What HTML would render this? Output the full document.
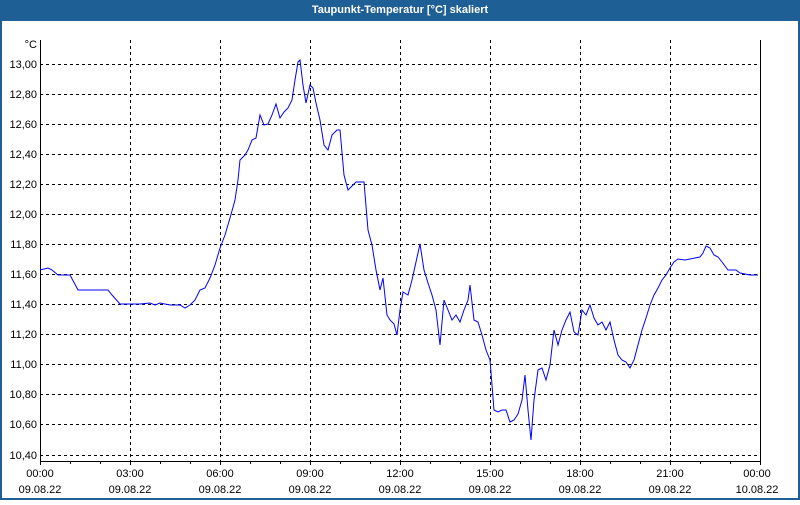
<!DOCTYPE html>
<html><head><meta charset="utf-8"><style>
body{margin:0;width:800px;height:500px;overflow:hidden;background:#fff;font-family:"Liberation Sans","DejaVu Sans",sans-serif}
</style></head><body>
<svg width="800" height="500" xmlns="http://www.w3.org/2000/svg" font-family="Liberation Sans, DejaVu Sans, sans-serif" font-size="11">
<rect x="0" y="0" width="800" height="500" fill="#1e5f96"/>
<rect x="2" y="21" width="796" height="477" fill="#fff"/>
<text x="400" y="13" fill="#fff" font-weight="bold" text-anchor="middle">Taupunkt-Temperatur [°C] skaliert</text>
<g stroke="#000" stroke-width="1" stroke-dasharray="3,3" shape-rendering="crispEdges">
<line x1="40" x2="760" y1="64.5" y2="64.5"/><line x1="40" x2="760" y1="94.5" y2="94.5"/><line x1="40" x2="760" y1="124.5" y2="124.5"/><line x1="40" x2="760" y1="154.5" y2="154.5"/><line x1="40" x2="760" y1="184.5" y2="184.5"/><line x1="40" x2="760" y1="214.5" y2="214.5"/><line x1="40" x2="760" y1="244.5" y2="244.5"/><line x1="40" x2="760" y1="274.5" y2="274.5"/><line x1="40" x2="760" y1="304.5" y2="304.5"/><line x1="40" x2="760" y1="334.5" y2="334.5"/><line x1="40" x2="760" y1="364.5" y2="364.5"/><line x1="40" x2="760" y1="394.5" y2="394.5"/><line x1="40" x2="760" y1="424.5" y2="424.5"/><line x1="40" x2="760" y1="455.5" y2="455.5"/>
<line y1="40" y2="461" x1="130.5" x2="130.5"/><line y1="40" y2="461" x1="220.5" x2="220.5"/><line y1="40" y2="461" x1="310.5" x2="310.5"/><line y1="40" y2="461" x1="400.5" x2="400.5"/><line y1="40" y2="461" x1="490.5" x2="490.5"/><line y1="40" y2="461" x1="580.5" x2="580.5"/><line y1="40" y2="461" x1="670.5" x2="670.5"/>
</g>
<g stroke="#000" stroke-width="1" shape-rendering="crispEdges" fill="none">
<polyline points="40.5,40 40.5,461.5 760.5,461.5 760.5,40"/>
<path d="M40.5 461v4M70.5 461v3M100.5 461v3M130.5 461v4M160.5 461v3M190.5 461v3M220.5 461v4M250.5 461v3M280.5 461v3M310.5 461v4M340.5 461v3M370.5 461v3M400.5 461v4M430.5 461v3M460.5 461v3M490.5 461v4M520.5 461v3M550.5 461v3M580.5 461v4M610.5 461v3M640.5 461v3M670.5 461v4M700.5 461v3M730.5 461v3M760.5 461v4"/>
</g>
<g fill="#000" text-anchor="end">
<text x="37" y="48">°C</text>
<text x="37" y="68">13,00</text><text x="37" y="98">12,80</text><text x="37" y="128">12,60</text><text x="37" y="158">12,40</text><text x="37" y="188">12,20</text><text x="37" y="218">12,00</text><text x="37" y="248">11,80</text><text x="37" y="278">11,60</text><text x="37" y="308">11,40</text><text x="37" y="338">11,20</text><text x="37" y="368">11,00</text><text x="37" y="398">10,80</text><text x="37" y="428">10,60</text><text x="37" y="459">10,40</text>
</g>
<g fill="#000" text-anchor="middle">
<text x="40" y="477">00:00</text><text x="40" y="493">09.08.22</text>
<text x="130" y="477">03:00</text><text x="130" y="493">09.08.22</text>
<text x="220" y="477">06:00</text><text x="220" y="493">09.08.22</text>
<text x="310" y="477">09:00</text><text x="310" y="493">09.08.22</text>
<text x="400" y="477">12:00</text><text x="400" y="493">09.08.22</text>
<text x="490" y="477">15:00</text><text x="490" y="493">09.08.22</text>
<text x="580" y="477">18:00</text><text x="580" y="493">09.08.22</text>
<text x="670" y="477">21:00</text><text x="670" y="493">09.08.22</text>
<text x="757" y="477">00:00</text><text x="757" y="493">10.08.22</text>
</g>
<polyline fill="none" stroke="#0000ff" stroke-width="1" points="40,270 48,268 52,270 58,275 70,275 78,290 108,290 112,295 120,304 140,304 150,303 155,305 160,303 170,305 180,305 185,308 190,305 195,300 200,290 205,288 210,278 215,265 220,248 225,235 230,218 235,200 238,180 240,160 245,155 248,150 252,140 256,138 260,115 264,125 268,124 272,115 276,104 280,118 284,112 288,108 292,100 295,80 298,62 300,60 303,85 306,103 310,85 313,88 316,103 320,120 324,145 328,150 332,135 337,130 340,130 344,175 348,190 352,186 356,182 360,182 364,182 368,230 372,245 376,270 380,290 383,278 387,315 390,320 394,324 397,335 400,310 403,292 408,295 412,280 416,262 420,244 424,270 428,283 432,295 436,310 440,345 444,300 448,310 452,320 456,315 460,322 464,310 468,300 470,285 474,320 478,322 482,335 486,350 490,360 494,410 498,412 502,410 506,410 510,422 514,420 518,414 522,400 525,375 528,410 531,440 534,400 538,370 542,368 546,380 550,365 554,330 558,345 562,330 566,320 570,312 574,332 578,335 582,310 586,315 590,305 594,318 598,325 602,322 606,330 610,322 614,340 618,355 622,360 626,362 630,368 634,360 638,345 642,330 646,318 650,305 654,295 658,288 662,280 666,275 670,268 674,262 678,259 685,260 695,258 700,257 703,253 706,246 710,248 714,255 718,257 722,262 728,270 736,270 740,273 750,275 758,275"/>
</svg>
</body></html>
